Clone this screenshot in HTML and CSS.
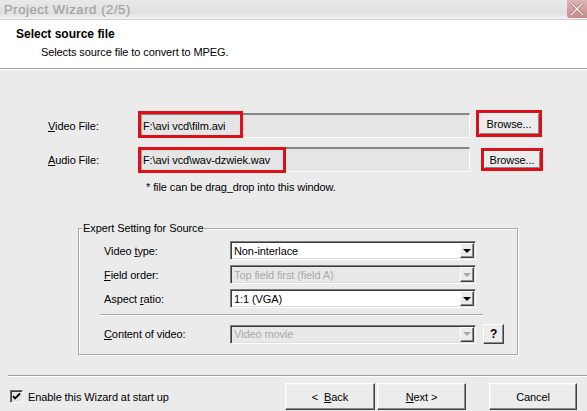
FILE: index.html
```html
<!DOCTYPE html>
<html>
<head>
<meta charset="utf-8">
<link rel="stylesheet" href="styles.css">
</head>
<body>
<div class="window">
  <div class="titlebar">
    <span class="title">Project Wizard (2/5)</span>
    <span class="close"><svg width="20" height="18" viewBox="0 0 20 18"><path d="M4 3 L16 15 M16 3 L4 15" stroke="#b07070" stroke-width="3"/><path d="M4 3 L16 15 M16 3 L4 15" stroke="#fff" stroke-width="1.4"/></svg></span>
  </div>
  <div class="header">
    <div class="h1">Select source file</div>
    <div class="subtitle">Selects source file to convert to MPEG.</div>
  </div>
  <div class="files">
    <div class="file-row">
      <span class="flabel"><u>V</u>ideo File:</span>
      <div class="textbox"><span>F:\avi vcd\film.avi</span><span class="mark mark-video"></span></div>
      <div class="browse browse-video">Browse...</div>
    </div>
    <div class="file-row">
      <span class="flabel"><u>A</u>udio File:</span>
      <div class="textbox"><span>F:\avi vcd\wav-dzwiek.wav</span><span class="mark mark-audio"></span></div>
      <div class="browse browse-audio">Browse...</div>
    </div>
    <div class="note">* file can be drag_drop into this window.</div>
  </div>
  <div class="group">
    <div class="gtitle">Expert Setting for Source</div>
    <div class="grows">
      <div class="grow">
        <span class="glabel">Video <u>t</u>ype:</span>
        <div class="combo"><span class="ctext">Non-interlace</span><span class="arrow"><i class="tri"></i></span></div>
      </div>
      <div class="grow">
        <span class="glabel"><u>F</u>ield order:</span>
        <div class="combo disabled"><span class="ctext">Top field first (field A)</span><span class="arrow"><i class="tri"></i></span></div>
      </div>
      <div class="grow">
        <span class="glabel">Aspect <u>r</u>atio:</span>
        <div class="combo"><span class="ctext">1:1 (VGA)</span><span class="arrow"><i class="tri"></i></span></div>
      </div>
      <div class="gsep"></div>
      <div class="grow grow-last">
        <span class="glabel"><u>C</u>ontent of video:</span>
        <div class="combo disabled"><span class="ctext">Video movie</span><span class="arrow"><i class="tri"></i></span></div>
        <div class="help">?</div>
      </div>
    </div>
  </div>
  <div class="fsep"></div>
  <div class="footer">
    <div class="check">
      <span class="box"><svg width="11" height="11" viewBox="0 0 11 11"><path d="M2 5 L4 7.5 L9 2.5" fill="none" stroke="#000" stroke-width="1.8"/></svg></span>
      <span>Enable this Wizard at start up</span>
    </div>
    <div class="spacer"></div>
    <div class="btn btn-back">&lt;&nbsp;&nbsp;<u>B</u>ack</div>
    <div class="btn btn-next"><u>N</u>ext &gt;</div>
    <div class="btn btn-cancel">Cancel</div>
  </div>
</div>
</body>
</html>
```

FILE: styles.css
```css
body {
  margin: 0;
  width: 587px;
  height: 411px;
  overflow: hidden;
  background: #ebebeb;
  font-family: "Liberation Sans", Arial, sans-serif;
  font-size: 11px;
  letter-spacing: -0.1px;
  color: #000;
}
u { text-decoration: underline; text-underline-offset: 1px; }

.window {
  display: flex;
  flex-direction: column;
  height: 411px;
}

.titlebar {
  flex: none;
  height: 19px;
  display: flex;
  justify-content: space-between;
  background: linear-gradient(#e9e9e9, #e0e0e0 70%, #f3f3f3);
  border-bottom: 1px solid #cdcdcd;
}
.title {
  padding: 3px 0 0 4px;
  font-size: 13px;
  letter-spacing: 0.6px;
  line-height: 14px;
  color: #a0a0a0;
  -webkit-text-stroke: 0.2px #a0a0a0;
}
.close {
  width: 20px;
  height: 18px;
  background: linear-gradient(#e2b4b4, #c98b8b);
  border-radius: 0 0 0 3px;
  display: flex;
}

.header {
  flex: none;
  height: 48px;
  background: #fff;
  border-bottom: 1px solid #a2a2a2;
  box-shadow: 0 1px 0 #fff;
}
.h1 {
  padding: 7px 0 0 16px;
  font-size: 12px;
  font-weight: bold;
  line-height: 14px;
  letter-spacing: 0;
}
.subtitle {
  margin-top: 4px;
  padding-left: 41px;
  line-height: 14px;
}

.files {
  margin-top: 44px;
}
.file-row {
  display: flex;
  align-items: center;
  height: 25px;
  padding-left: 48px;
}
.file-row + .file-row { margin-top: 9px; }
.flabel { width: 93px; }
.textbox {
  position: relative;
  box-sizing: border-box;
  width: 329px;
  height: 25px;
  display: flex;
  align-items: center;
  padding-left: 1px;
  border-style: solid;
  border-width: 2px 1px 1px 1px;
  border-color: #858585 #fff #fff #a0a0a0;
  background: #e5e5e5;
}
.mark {
  position: absolute;
  box-sizing: border-box;
  border: 3px solid #dc1016;
}
.mark-video { left: -4px; top: -4px; width: 105px; height: 27px; }
.mark-audio { left: -4px; top: -2px; width: 148px; height: 26px; }

.browse {
  box-sizing: border-box;
  display: flex;
  align-items: center;
  justify-content: center;
  border: 3px solid #dc1016;
  background: #ececec;
  box-shadow: inset 1px 1px 0 #fff, inset -1px -1px 0 #8a8a8a;
}
.browse-video {
  width: 66px;
  height: 27px;
  margin-left: 6px;
  align-self: flex-start;
  margin-top: -3px;
}
.browse-audio {
  width: 62px;
  height: 23px;
  margin-left: 11px;
}

.note {
  margin-top: 8px;
  padding-left: 146px;
  line-height: 14px;
}

.group {
  flex: none;
  box-sizing: border-box;
  margin: 34px 0 0 78px;
  width: 440px;
  height: 127px;
  border: 1px solid #a8a8a8;
  box-shadow: inset 1px 1px 0 #fff, 1px 1px 0 #fff;
}
.gtitle {
  width: fit-content;
  height: 14px;
  line-height: 14px;
  margin: -8px 0 0 3px;
  padding: 0 1px;
  background: #ebebeb;
}
.grows { margin-top: 6px; }
.grow {
  display: flex;
  align-items: center;
  height: 19px;
  padding-left: 25px;
  margin-bottom: 5px;
}
.glabel { width: 126px; }
.combo {
  box-sizing: border-box;
  width: 246px;
  height: 19px;
  display: flex;
  align-items: center;
  border-style: solid;
  border-width: 1px;
  border-color: #7c7c7c #fff #fff #7c7c7c;
  box-shadow: inset 1px 1px 0 #3c3c3c, inset -1px -1px 0 #dcdcdc;
  background: #fff;
  padding: 1px;
}
.ctext {
  flex: 1;
  padding-left: 2px;
  line-height: 14px;
  white-space: nowrap;
  overflow: hidden;
}
.arrow {
  box-sizing: border-box;
  width: 14px;
  height: 15px;
  display: flex;
  align-items: center;
  justify-content: center;
  background: #ececec;
  border-style: solid;
  border-width: 1px;
  border-color: #fff #404040 #404040 #fff;
  box-shadow: inset -1px -1px 0 #8a8a8a;
}
.tri {
  width: 0;
  height: 0;
  border-left: 4px solid transparent;
  border-right: 4px solid transparent;
  border-top: 4px solid #000;
}
.combo.disabled { background: #e8e8e8; }
.combo.disabled .ctext { color: #a8a8a8; }
.combo.disabled .tri { border-top-color: #a8a8a8; }

.gsep {
  margin: 6px 0 0 21px;
  width: 383px;
  border-top: 1px solid #a8a8a8;
  border-bottom: 1px solid #fff;
}
.grow-last {
  margin-top: 8px;
  height: 20px;
}
.help {
  box-sizing: border-box;
  margin-left: 7px;
  width: 21px;
  height: 20px;
  display: flex;
  align-items: center;
  justify-content: center;
  font-weight: bold;
  font-size: 12px;
  background: #ececec;
  border-style: solid;
  border-width: 1px;
  border-color: #fff #404040 #404040 #fff;
  box-shadow: inset -1px -1px 0 #8a8a8a;
}

.fsep {
  flex: none;
  margin: 20px 0 0 8px;
  border-top: 1px solid #a0a0a0;
  border-bottom: 1px solid #fff;
}
.footer {
  flex: none;
  display: flex;
  align-items: center;
  height: 27px;
  margin-top: 6px;
  padding: 0 10px;
}
.check {
  display: flex;
  align-items: center;
  gap: 5px;
}
.box {
  box-sizing: border-box;
  width: 13px;
  height: 13px;
  display: flex;
  align-items: center;
  justify-content: center;
  background: #e4e4e4;
  border-style: solid;
  border-width: 1px;
  border-color: #6a6a6a #fff #fff #6a6a6a;
  box-shadow: inset 1px 1px 0 #404040;
}
.spacer { flex: 1; }
.btn {
  box-sizing: border-box;
  height: 27px;
  display: flex;
  align-items: center;
  justify-content: center;
  background: #ececec;
  border-style: solid;
  border-width: 1px;
  border-color: #fff #404040 #404040 #fff;
  box-shadow: inset -1px -1px 0 #8a8a8a, inset 1px 1px 0 #f4f4f4;
}
.btn-back { width: 90px; }
.btn-next { width: 89px; margin-left: 2px; }
.btn-cancel { width: 88px; margin-left: 23px; }
```
